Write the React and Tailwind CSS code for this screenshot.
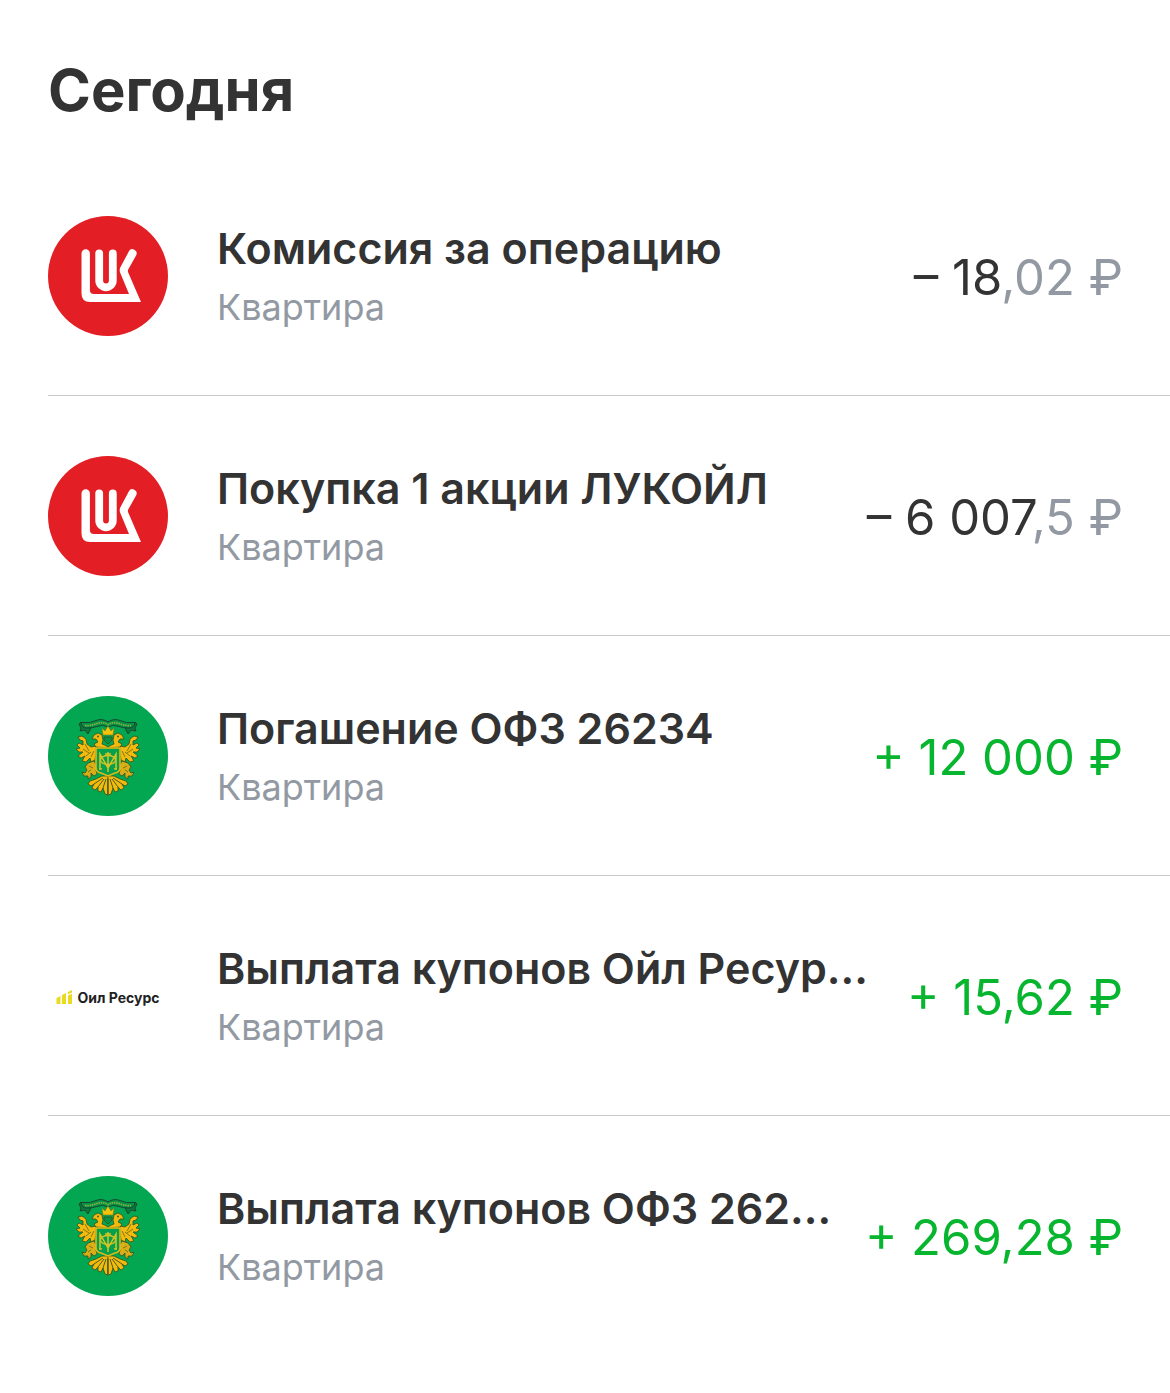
function LukoilLogo() {
  return (
    <svg viewBox="0 0 120 120" className="size-[120px] shrink-0" role="img" aria-label="ЛУКОЙЛ">
      <circle cx="60" cy="60" r="60" fill="#e31e24" />
      <path
        d="M33.500 37.500a4.200 4.200 0 0 1 8.400 0V74a4 4 0 0 0 4 4H81L72.300 57Q71 54 72.500 51L80.800 35.600A4.100 4.100 0 0 1 88.200 39.200L80.200 53.500Q79.600 55 80.200 56.500L93 86H42Q33.500 86 33.500 77.500Z"
        fill="#fff"
      />
      <path
        d="M51.200 37.300V64.500a6.800 6.800 0 0 0 13.600 0V37.300"
        fill="none"
        stroke="#fff"
        strokeWidth="7.800"
        strokeLinecap="round"
      />
    </svg>
  );
}

function EagleHalf() {
  return (
    <g stroke="#37521c" strokeWidth="0.800" strokeLinejoin="round">
      {/* wing */}
      <path
        d="M48 57V50L43 51L39 48L38 43L34 40L30 41L32 44L35 45L35 49L31 47L29 49L32 52L28 53L31 56L35 56L30 60L33 62L37 60L34 65L38 66L42 62L43 66L47 64Z"
        fill="#f2b90f"
      />
      <path d="M37 48L41 55M35 53L41 57M38 60L43 56M43 61L46 55" fill="none" stroke="#7d7a16" strokeWidth="1" />
      {/* neck and head */}
      <path
        d="M59 52L48 51L46 48L50 46L48 43L44 43L46 39L50 37L54 39L55 44L54 48L59 50Z"
        fill="#f2b90f"
      />
      <circle cx="50" cy="40.500" r="0.900" fill="#37521c" stroke="none" />
      {/* leg and claw */}
      <path
        d="M46 65L40 67L37 71L39 74L37 77L34 76L36 80L40 80L40 83L43 81L43 77L46 80L49 78L48 74L50 72Z"
        fill="#d9ae18"
      />
      <path d="M41 70L45 72M40 76L43 74" fill="none" stroke="#5f6b19" />
      {/* tail */}
      <path
        d="M60 80L54 80L48 83L42 85L40 88L43 90L46 88L44 92L47 94L50 91L50 95L53 96L55 92L57 98L60 99Z"
        fill="#f2b90f"
      />
      <path d="M55 82L46 88M56 83L50 91M58 83L55 92M60 83V98" fill="none" stroke="#4d5f1a" strokeWidth="1" />
    </g>
  );
}

function RibbonHalf() {
  return (
    <g stroke="#17482c" strokeWidth="1" strokeLinejoin="round">
      <path d="M39 31L33 26L31 28L33 32L32 35L37 34L40 38L43 32Z" fill="#0a7a3f" />
      <path
        d="M60 26Q54 22 48 24.500Q41 27.500 37 26.500Q34 26 33 27Q34 32 39 32Q45 32 49 30.500Q55 28 60 31"
        fill="#079247"
      />
    </g>
  );
}

function OfzLogo() {
  return (
    <svg viewBox="0 0 120 120" className="size-[120px] shrink-0" role="img" aria-label="ОФЗ">
      <circle cx="60" cy="60" r="60" fill="#03a651" />
      <EagleHalf />
      <g transform="matrix(-1 0 0 1 120 0)">
        <EagleHalf />
      </g>
      <RibbonHalf />
      <g transform="matrix(-1 0 0 1 120 0)">
        <RibbonHalf />
      </g>
      <path
        d="M37 29.500Q43 30 49 27.500Q55 25.500 60 28.500Q65 25.500 71 27.500Q77 30 83 29.500"
        fill="none"
        stroke="#9cb53a"
        strokeWidth="1.600"
        strokeDasharray="1.400 0.900"
      />
      {/* crown */}
      <path d="M54 32L57 35L60 30L63 35L66 32L65 39H55Z" fill="#f7c20b" stroke="#7c7d16" strokeWidth="0.600" />
      <path d="M56 41H64V44L60 48L56 44Z" fill="#079247" stroke="#37521c" strokeWidth="0.800" />
      {/* shield */}
      <path
        d="M48 52H72V72Q72 76 67 77L60 80L53 77Q48 76 48 72Z"
        fill="#05a04e"
        stroke="#e4bb16"
        strokeWidth="1.500"
      />
      <path
        d="M52 73V58L60 72L68 58V73M60 56V76M57 58H63M51 73H54M66 73H69"
        fill="none"
        stroke="#d7c324"
        strokeWidth="1.500"
      />
      <ellipse cx="60" cy="64" rx="7.500" ry="4.500" fill="none" stroke="#d7c324" strokeWidth="1.300" />
    </svg>
  );
}

function OilResursLogo() {
  return (
    <div className="flex size-[120px] shrink-0 items-center justify-center gap-1 rounded-full bg-white pt-1">
      <svg viewBox="0 0 17 17" className="size-[17px] shrink-0" fill="#eadb22" aria-hidden="true">
        <path d="M0.500 8L4.500 6V14H0.500ZM6 5L10 3V14H6ZM12 5.500L16 3.800V14H12ZM12 2L16 0V2.500L12 4.200Z" />
      </svg>
      <span className="text-[14px] leading-4 font-bold whitespace-nowrap text-[#222]">
        Оил Ресурс
      </span>
    </div>
  );
}

const operations = [
  { id: 1, Logo: LukoilLogo, title: "Комиссия за операцию", account: "Квартира", sum: "– 18", rest: ",02 ₽" },
  { id: 2, Logo: LukoilLogo, title: "Покупка 1 акции ЛУКОЙЛ", account: "Квартира", sum: "– 6 007", rest: ",5 ₽" },
  { id: 3, Logo: OfzLogo, title: "Погашение ОФЗ 26234", account: "Квартира", sum: "+ 12 000 ₽", income: true },
  { id: 4, Logo: OilResursLogo, title: "Выплата купонов Ойл Ресур...", account: "Квартира", sum: "+ 15,62 ₽", income: true },
  { id: 5, Logo: OfzLogo, title: "Выплата купонов ОФЗ 262...", account: "Квартира", sum: "+ 269,28 ₽", income: true },
];

function Operation({ Logo, title, account, sum, rest, income }) {
  return (
    <li className="flex items-center border-b border-[#c8c8c8] pt-[60px] pr-[47px] pb-[59px] last:border-b-0">
      <Logo />
      <div className="ml-[49px] min-w-0 grow pt-0.5">
        <h2 className="text-[43px] leading-[60px] font-semibold whitespace-nowrap text-[#333]">
          {title}
        </h2>
        <p className="text-[36px] leading-[58px] text-[#9299a2]">{account}</p>
      </div>
      <p
        className={`shrink-0 pt-1 text-[49px] leading-[60px] whitespace-nowrap ${
          income ? "text-[#08b52e]" : "text-[#333]"
        }`}
      >
        {sum}
        {rest && <span className="text-[#9299a2]">{rest}</span>}
      </p>
    </li>
  );
}

export default function App() {
  return (
    <main className="min-h-screen bg-white pl-12 font-['Inter',sans-serif]">
      <h1 className="pt-[54px] pb-[30px] text-[58px] leading-[72px] font-bold text-[#333]">Сегодня</h1>
      <ul>
        {operations.map((op) => (
          <Operation key={op.id} {...op} />
        ))}
      </ul>
    </main>
  );
}
